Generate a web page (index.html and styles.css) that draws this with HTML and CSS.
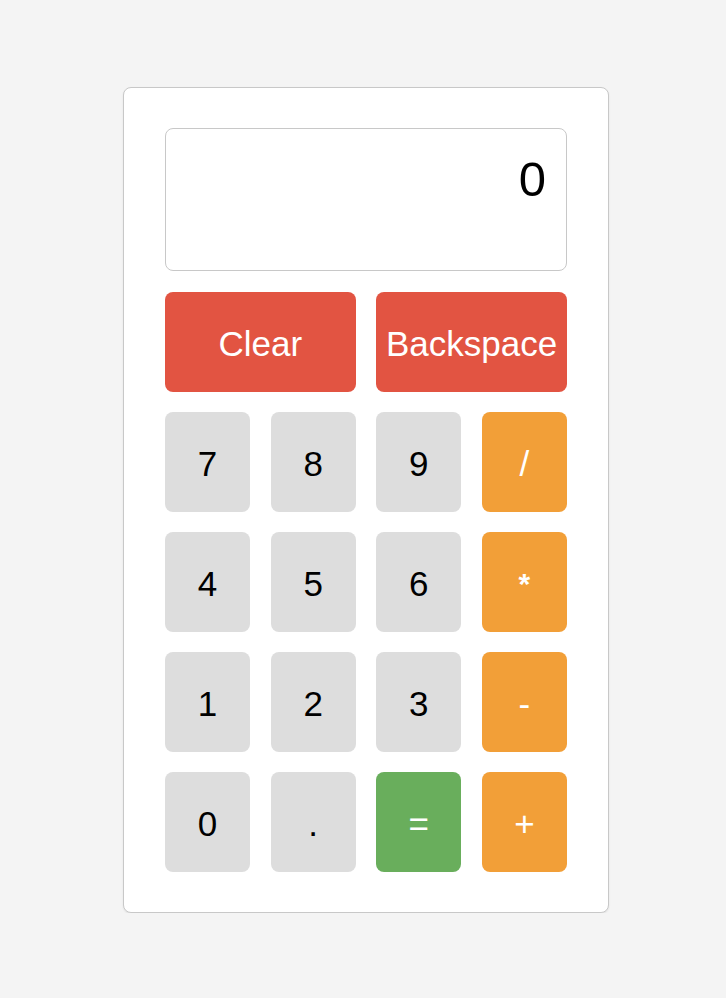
FILE: index.html
```html
<!DOCTYPE html>
<html>
<head>
<meta charset="utf-8">
<link rel="stylesheet" href="styles.css">
</head>
<body>
<div class="calc">
  <div class="display">0</div>
  <div class="keys">
    <button class="key wide red">Clear</button>
    <button class="key wide red">Backspace</button>
    <button class="key">7</button>
    <button class="key">8</button>
    <button class="key">9</button>
    <button class="key op">/</button>
    <button class="key">4</button>
    <button class="key">5</button>
    <button class="key">6</button>
    <button class="key op small">*</button>
    <button class="key">1</button>
    <button class="key">2</button>
    <button class="key">3</button>
    <button class="key op">-</button>
    <button class="key">0</button>
    <button class="key">.</button>
    <button class="key eq">=</button>
    <button class="key op">+</button>
  </div>
</div>
</body>
</html>
```

FILE: styles.css
```css
html, body {
  margin: 0;
  padding: 0;
  background: #f4f4f4;
  font-family: "Liberation Sans", Arial, sans-serif;
}
body {
  padding: 87px 0 0 123px;
}
.calc {
  box-sizing: border-box;
  width: 486px;
  padding: 40px 41px;
  background: #fff;
  border: 1px solid #c8c8c8;
  border-radius: 8px;
  box-shadow: 0 1px 2px rgba(0,0,0,0.08);
}
.display {
  box-sizing: border-box;
  height: 143px;
  border: 1px solid #c8c8c8;
  border-radius: 8px;
  padding: 22px 20px 0 20px;
  text-align: right;
  font-size: 49px;
  line-height: 57px;
  color: #000;
  margin-bottom: 21px;
}
.keys {
  display: grid;
  grid-template-columns: repeat(4, 1fr);
  grid-auto-rows: 100px;
  gap: 20px 20.5px;
}
.key {
  border: none;
  border-radius: 8px;
  background: #dddddd;
  color: #000;
  font-family: "Liberation Sans", Arial, sans-serif;
  font-size: 35px;
  padding: 4px 0 0 0;
  margin: 0;
}
.wide { grid-column: span 2; }
.red { background: #e25442; color: #fff; }
.op { background: #f29f38; color: #fff; }
.eq { background: #69ae5c; color: #fff; }
.small { font-size: 30px; font-weight: bold; }
```
